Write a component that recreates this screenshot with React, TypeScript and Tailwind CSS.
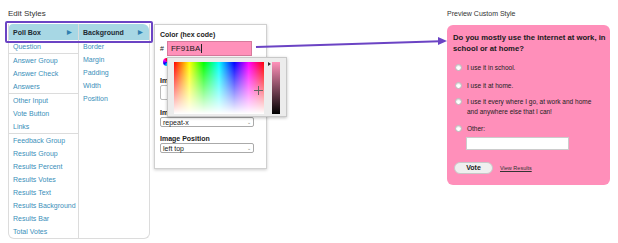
import React from 'react';

const groups: string[][] = [
  ['Question'],
  ['Answer Group', 'Answer Check', 'Answers'],
  ['Other Input', 'Vote Button', 'Links'],
  ['Feedback Group', 'Results Group', 'Results Percent', 'Results Votes', 'Results Text', 'Results Background', 'Results Bar', 'Total Votes'],
];

const props = ['Border', 'Margin', 'Padding', 'Width', 'Position'];

const Radio = () => (
  <span className="mt-[1px] h-[7px] w-[7px] shrink-0 rounded-full border border-[#b9b9b9] bg-white shadow-[inset_0_1px_1px_rgba(0,0,0,0.15)]" />
);

const App: React.FC = () => {
  return (
    <div className="relative h-[243px] w-[618px] overflow-hidden bg-white font-['Liberation_Sans',Arial,sans-serif] text-[#222]">
      <div className="flex pl-[8px] pr-[8px]">
        {/* left: editor */}
        <div className="flex flex-col">
          <div className="h-[22px] pt-[9px] text-[8px] leading-[10px] text-[#333]">Edit Styles</div>
          <div className="flex items-start">
            {/* list box */}
            <div className="mt-[2px] flex w-[142px] rounded-b-[6px] border border-t-0 border-[#dcdcdc] text-[7px] leading-[13px] text-[#3b8fba]">
              <div className="w-[71px] border-r border-[#dcdcdc]">
                <div className="flex h-[16px] items-center justify-between rounded-tl-[4px] bg-[#a7d7e4] pl-[4px] pr-[6px] font-bold text-[#1d2a33]">
                  <span>Poll Box</span>
                  <span className="text-[6px] text-[#2f7fb0]">▶</span>
                </div>
                {groups.map((g, i) => (
                  <div key={i} className={i < groups.length - 1 ? 'border-b border-[#dcdcdc]' : ''}>
                    {g.map((t) => (
                      <div key={t} className="h-[13px] pl-[4px]">{t}</div>
                    ))}
                  </div>
                ))}
              </div>
              <div className="w-[71px]">
                <div className="flex h-[16px] items-center justify-between rounded-tr-[6px] bg-[#a7d7e4] pl-[4px] pr-[6px] font-bold text-[#1d2a33]">
                  <span>Background</span>
                  <span className="text-[6px] text-[#2f7fb0]">▶</span>
                </div>
                {props.map((t) => (
                  <div key={t} className="h-[13px] pl-[4px]">{t}</div>
                ))}
              </div>
            </div>

            {/* property panel */}
            <div className="ml-[4px] mt-[2px] flex h-[145px] w-[113px] flex-col border border-[#d0d0d0] px-[5px] pt-[5px] text-[7px] leading-[9px] shadow-[0_1px_3px_rgba(0,0,0,0.2)]">
              <div className="font-bold">Color (hex code)</div>
              <div className="mt-[2px] flex items-center gap-[3px]">
                <span className="text-[7px]">#</span>
                <div className="flex h-[15px] w-[85px] items-center border border-[#d77a9c] bg-[#ff91ba] px-[3px] text-[8px] text-[#222]">
                  FF91BA<span className="ml-[1px] h-[9px] w-[1px] bg-[#222]" />
                </div>
              </div>
              <div className="mt-[2px] ml-[3px] h-[8px] w-[8px] rounded-full bg-[conic-gradient(#f00,#ff0,#0f0,#0ff,#00f,#f0f,#f00)]" />
              <div className="mt-[10px] font-bold">Image URL</div>
              <div className="h-[15px] w-[94px] rounded-[2px] border border-[#bbb] bg-white" />
              <div className="mt-[8px] font-bold">Image Repeat</div>
              <div className="flex h-[10px] w-[94px] items-center justify-between rounded-[2px] border border-[#aaa] px-[2px] text-[7px]">
                <span>repeat-x</span>
                <span className="text-[5px] text-[#777]">⌄</span>
              </div>
              <div className="mt-[7px] font-bold">Image Position</div>
              <div className="flex h-[10px] w-[94px] items-center justify-between rounded-[2px] border border-[#aaa] px-[2px] text-[7px]">
                <span>left top</span>
                <span className="text-[5px] text-[#777]">⌄</span>
              </div>
            </div>
          </div>
        </div>

        {/* right: preview */}
        <div className="ml-auto flex w-[163px] flex-col">
          <div className="h-[25px] pt-[9px] text-[7px] leading-[10px] text-[#333]">Preview Custom Style</div>
          <div className="flex h-[160px] flex-col rounded-[6px] bg-[#ff8fba] px-[6px] pt-[7px] text-[6.5px] leading-[10px] text-[#222]">
            <div className="-mr-[6px] text-[7.7px] font-bold leading-[11px] text-[#1a1a1a]">
              Do you mostly use the internet at work, in school or at home?
            </div>
            <div className="mt-[9px] flex gap-[5px] pl-[2px]">
              <Radio />
              <span>I use it in school.</span>
            </div>
            <div className="mt-[8px] flex gap-[5px] pl-[2px]">
              <Radio />
              <span>I use it at home.</span>
            </div>
            <div className="mt-[6px] flex gap-[5px] pl-[2px]">
              <Radio />
              <span className="w-[127px]">I use it every where I go, at work and home and anywhere else that I can!</span>
            </div>
            <div className="mt-[7px] flex gap-[5px] pl-[2px]">
              <Radio />
              <span>Other:</span>
            </div>
            <div className="ml-[13px] mt-[3px] h-[13px] w-[103px] border border-[#ccc] bg-white" />
            <div className="mt-[12px] flex items-center gap-[7px] pl-[1px]">
              <div className="flex h-[12px] w-[39px] items-center justify-center rounded-full border border-[#c8c8c8] bg-[#efefef] text-[7px] font-bold">
                Vote
              </div>
              <span className="text-[5.5px] text-[#333] underline">View Results</span>
            </div>
          </div>
        </div>
      </div>

      {/* selection highlight */}
      <div className="absolute left-[5px] top-[21px] h-[22px] w-[148px] rounded-[2px] border-2 border-[#6b44c4]" />

      {/* color picker popup */}
      <div className="absolute left-[167px] top-[57px] flex h-[60px] w-[120px] gap-[8px] border border-[#c8c8c8] bg-[#ececec] px-[6px] py-[4px] shadow-[0_1px_3px_rgba(0,0,0,0.25)]">
        <div className="relative h-[52px] w-[91px] bg-[linear-gradient(to_right,#f00,#ff0_17%,#0f0_33%,#0ff_50%,#00f_67%,#f0f_83%,#f00)]">
          <div className="absolute inset-0 bg-[linear-gradient(to_bottom,rgba(255,255,255,0),#fff)]" />
          <svg className="absolute left-[80px] top-[24px]" width="9" height="9" viewBox="0 0 9 9">
            <path d="M4.5 0V9M0 4.5H9" stroke="#666" strokeWidth="1" />
          </svg>
        </div>
        <div className="relative h-[52px] w-[8px] bg-[linear-gradient(to_bottom,#ff91ba,#000)]">
          <span className="absolute -left-[4px] top-[0px] h-0 w-0 border-y-[2px] border-l-[3px] border-y-transparent border-l-[#333]" />
        </div>
      </div>

      {/* arrow */}
      <svg className="absolute left-0 top-0" width="618" height="243" viewBox="0 0 618 243">
        <line x1="256" y1="47" x2="440" y2="41.2" stroke="#6b44c4" strokeWidth="2" />
        <polygon points="447,41 438,37 438,45" fill="#6b44c4" />
      </svg>
    </div>
  );
};

export default App;
